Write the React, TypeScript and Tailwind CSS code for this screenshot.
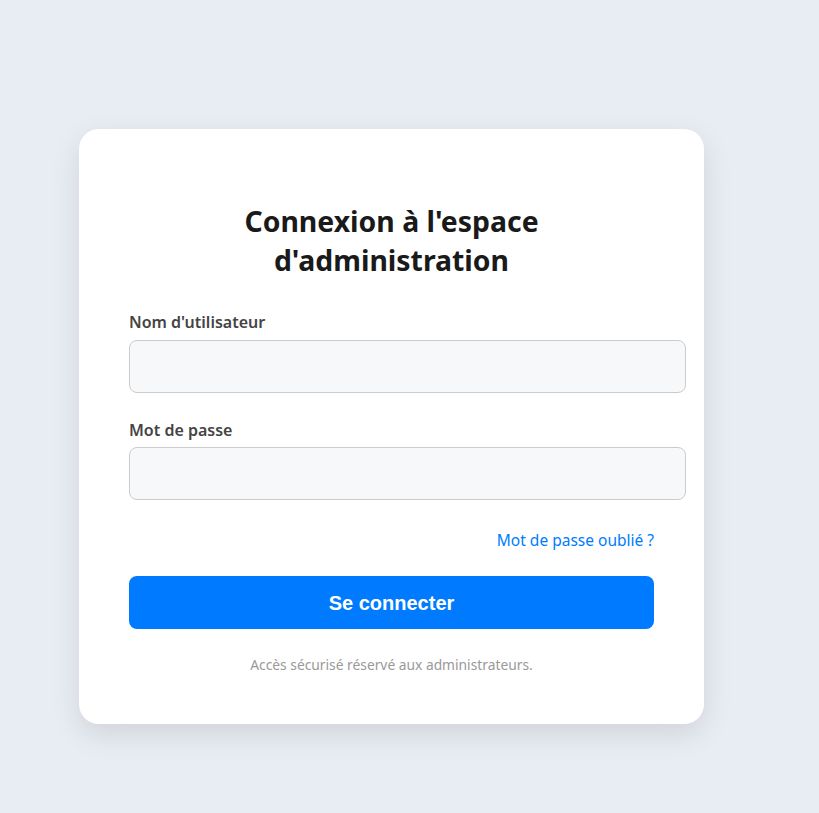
export default function App() {
  return (
    <div className="min-h-[813px] w-full bg-[#e8ecf3] pt-[129px] pl-[79px] font-['Noto_Sans',sans-serif]">
      <div className="w-[625px] rounded-[20px] bg-white px-[50px] pt-[73px] pb-[49px] shadow-[0_10px_30px_rgba(0,0,0,0.1)]">
        <h2 className="mx-auto mb-[31px] w-[330px] text-center text-[28.4px] leading-[39px] font-bold text-[#1a1a1a]">
          Connexion à l'espace d'administration
        </h2>
        <form onSubmit={(e) => e.preventDefault()}>
          <label className="mb-[7px] block text-[16px] leading-[22px] font-semibold text-[#444]">
            Nom d'utilisateur
          </label>
          <input
            type="text"
            className="box-content h-[21px] w-full rounded-[8px] border border-[#ccc] bg-[#f7f8fa] px-[15px] py-[15px] outline-none"
          />
          <label className="mt-[26px] mb-[6px] block text-[16px] leading-[22px] font-semibold text-[#444]">
            Mot de passe
          </label>
          <input
            type="password"
            className="box-content h-[21px] w-full rounded-[8px] border border-[#ccc] bg-[#f7f8fa] px-[15px] py-[15px] outline-none"
          />
          <div className="mt-[28px] text-right">
            <a href="#" className="text-[15.5px] leading-[22px] text-[#007bff]">
              Mot de passe oublié ?
            </a>
          </div>
          <button
            type="submit"
            className="mt-[24px] h-[53px] w-full rounded-[8px] bg-[#007bff] font-['Liberation_Sans',Arial,sans-serif] text-[20px] font-bold text-white"
          >
            Se connecter
          </button>
        </form>
        <p className="mt-[26px] text-center text-[13.8px] leading-[20px] text-[#999]">
          Accès sécurisé réservé aux administrateurs.
        </p>
      </div>
    </div>
  )
}
